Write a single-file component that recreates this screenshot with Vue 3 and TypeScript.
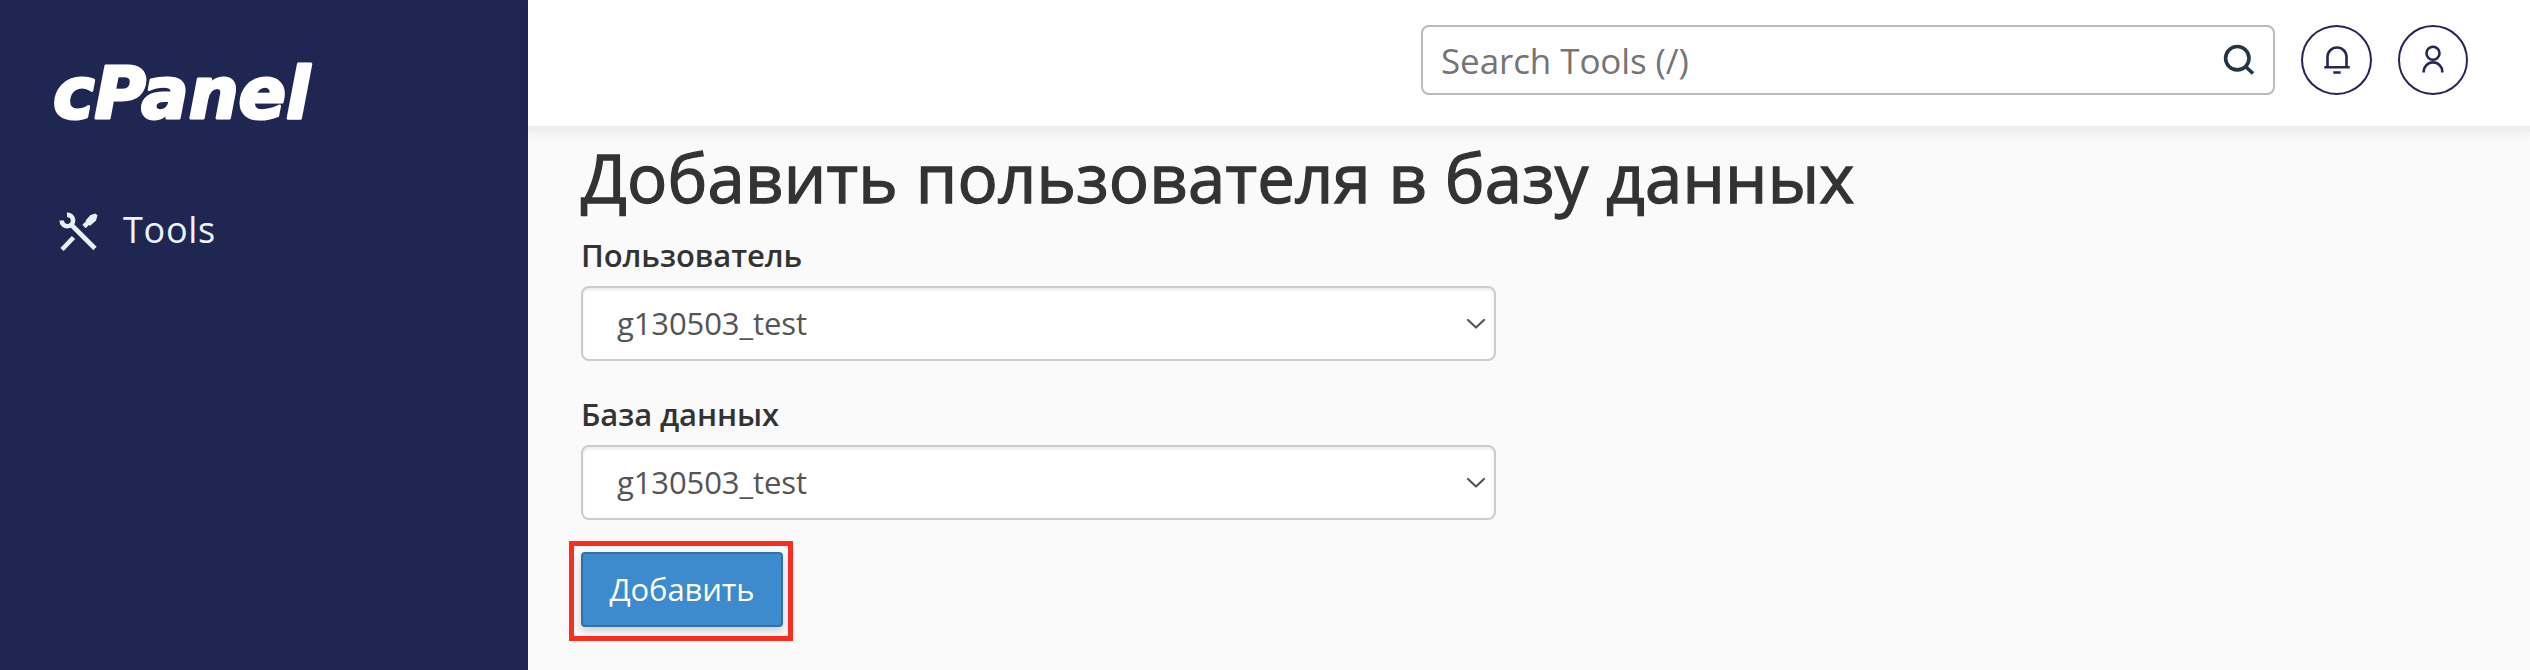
<script setup lang="ts">
import { ref } from 'vue'

interface Field {
  id: string
  label: string
  value: string
}

const title = 'Добавить пользователя в базу данных'
const query = ref('')
const fields: Field[] = [
  { id: 'user', label: 'Пользователь', value: 'g130503_test' },
  { id: 'database', label: 'База данных', value: 'g130503_test' },
]
</script>

<template>
  <div class="layout">
    <aside class="sidebar">
      <svg class="logo" viewBox="0 0 270 90" role="img" aria-label="cPanel">
        <text x="2" y="71" textLength="257" lengthAdjust="spacingAndGlyphs">cPanel</text>
      </svg>
      <a class="nav-item">
        <svg class="tools-icon" viewBox="0 0 40 40">
          <path class="line" d="M12 12.500 36 36.500M14.500 25.500 3 37.500" />
          <path class="wrench" d="M8 2.900A5.700 5.700 0 1 1 2.700 8.500" />
          <path class="line" d="M25 14.500 28 11.500" />
          <path class="solid" d="M36.500 1.500 38.500 3.500 37 8.500 31.500 13.500 28.500 13 26.500 10.500 27 8 31.500 3Z" />
        </svg>
        <span class="nav-text">Tools</span>
      </a>
    </aside>

    <div class="main">
      <header class="topbar">
        <div class="search">
          <input v-model="query" type="text" placeholder="Search Tools (/)" />
          <svg class="search-icon" viewBox="0 0 32 32">
            <circle cx="14.300" cy="14.200" r="11.700" />
            <path d="m22 22 8 7.500" />
          </svg>
        </div>
        <button class="round bell" type="button" aria-label="Notifications">
          <svg viewBox="0 0 32 32">
            <path d="M6.500 23.200V13a9.500 9.500 0 0 1 19 0V23.200M3.300 23.200H28.700M12.300 28.500H19.700" />
          </svg>
        </button>
        <button class="round" type="button" aria-label="Account">
          <svg viewBox="0 0 32 32">
            <circle cx="16" cy="9.200" r="6.500" />
            <path d="M6.700 28.500v-.800a9.300 9.300 0 0 1 18.600 0v.800" />
          </svg>
        </button>
      </header>

      <main class="content">
        <h1><span>{{ title }}</span></h1>
        <div v-for="field in fields" :key="field.id" class="field" :class="field.id">
          <label><span>{{ field.label }}</span></label>
          <div class="select">
            <span>{{ field.value }}</span>
            <svg viewBox="0 0 20 12"><path d="m2 2 8 7.500L18 2" /></svg>
          </div>
        </div>
        <div class="highlight">
          <button class="submit" type="button"><span>Добавить</span></button>
        </div>
      </main>
    </div>
  </div>
</template>

<style>
body {
  margin: 0;
}
</style>

<style scoped>
.layout {
  display: flex;
  width: 2530px;
  height: 670px;
  overflow: hidden;
  background: #fafafa;
  font-family: 'Open Sans', 'Noto Sans', sans-serif;
  color: #333;
}

.layout * {
  box-sizing: border-box;
}

.sidebar {
  flex: none;
  width: 528px;
  padding: 47px 0 0 51px;
  background: #202652;
}

.logo {
  display: block;
  width: 270px;
  height: 90px;
  overflow: visible;
}

.logo text {
  font-family: 'DejaVu Sans', sans-serif;
  font-size: 71px;
  font-weight: 700;
  font-style: italic;
  fill: #fff;
  stroke: #fff;
  stroke-width: 3;
  stroke-linejoin: round;
}

.nav-item {
  display: flex;
  align-items: center;
  height: 60px;
  margin-top: 63px;
  padding: 0 0 0 8px;
  gap: 24px;
}

.tools-icon {
  width: 40px;
  height: 40px;
  position: relative;
  top: 2px;
}

.tools-icon .line,
.tools-icon .wrench {
  fill: none;
  stroke: #e8f0f4;
  stroke-width: 4.600;
}

.tools-icon .solid {
  fill: #e8f0f4;
}

.nav-text {
  font-size: 36px;
  line-height: 60px;
  letter-spacing: 0.700px;
  color: #ecf2fa;
}

.main {
  flex: 1;
  display: flex;
  flex-direction: column;
}

.topbar {
  flex: none;
  display: flex;
  justify-content: flex-end;
  align-items: flex-start;
  height: 126px;
  padding: 25px 62px 0 0;
  background: #fff;
  box-shadow: 0 6px 0 #efefef, 0 8px 12px rgba(0, 0, 0, 0.060);
}

.search {
  display: flex;
  align-items: center;
  width: 854px;
  height: 70px;
  padding: 0 18px 0 18px;
  border: 2px solid #b9bbbe;
  border-radius: 8px;
}

.search input {
  flex: 1;
  height: 64px;
  padding: 0;
  border: 0;
  outline: 0;
  background: none;
  font: 35px 'Open Sans', 'Noto Sans', sans-serif;
  letter-spacing: -0.100px;
  color: #333;
}

.search input::placeholder {
  color: #757575;
  opacity: 1;
}

.search-icon {
  width: 32px;
  height: 32px;
  fill: none;
  stroke: #223645;
  stroke-width: 3.600;
}

.round {
  display: flex;
  align-items: center;
  justify-content: center;
  width: 70px;
  height: 70px;
  margin-left: 26px;
  padding: 0;
  border: 2px solid #252655;
  border-radius: 50%;
  background: #fff;
}

.round.bell {
  width: 71px;
}

.round svg {
  width: 32px;
  height: 32px;
  fill: none;
  stroke: #252655;
  stroke-width: 2.600;
}

.content {
  padding: 12px 0 0 53px;
}

h1 {
  margin: 0;
  height: 91px;
  font-size: 67px;
  line-height: 78px;
  font-weight: 400;
  letter-spacing: 0.210px;
  -webkit-text-stroke: 1.300px #333;
  color: #333;
  white-space: nowrap;
}

.field {
  width: 915px;
}

.field label {
  display: block;
  height: 57px;
  line-height: 52px;
  font-size: 31px;
  font-weight: 600;
  letter-spacing: -0.100px;
}

.field.database {
  margin-top: 27px;
}

.select {
  display: flex;
  align-items: center;
  justify-content: space-between;
  height: 75px;
  padding: 0 8px 0 34px;
  border: 2px solid #ccc;
  border-radius: 8px;
  background: #fff;
  box-shadow: inset 0 2px 3px rgba(0, 0, 0, 0.080);
  font-size: 31px;
  letter-spacing: -0.100px;
  color: #555;
}

.select span {
  padding-bottom: 1px;
}

.select svg {
  width: 20px;
  height: 12px;
  fill: none;
  stroke: #555;
  stroke-width: 2.200;
  stroke-linecap: round;
  stroke-linejoin: round;
}

.highlight {
  width: 224px;
  height: 100px;
  margin: 21px 0 0 -12px;
  padding: 6px 5px 0 7px;
  border: 5px solid #f92e20;
}

.submit {
  display: block;
  width: 202px;
  height: 75px;
  padding: 0 0 1px;
  border: 2px solid #3071a9;
  border-radius: 4px;
  background: #3d8bcd;
  box-shadow: 0 4px 8px rgba(0, 0, 0, 0.180);
  font: 31px 'Open Sans', 'Noto Sans', sans-serif;
  letter-spacing: -0.100px;
  color: #fff;
}
</style>
